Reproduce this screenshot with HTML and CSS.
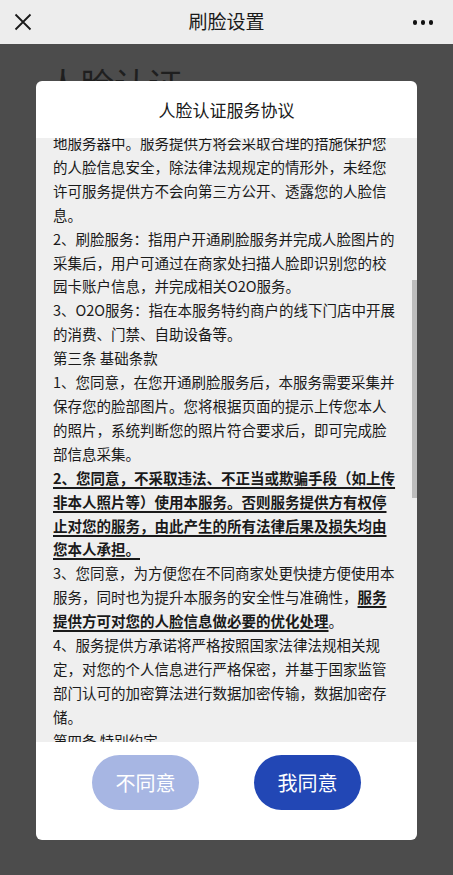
FILE: index.html
```html
<!DOCTYPE html>
<html lang="zh-CN">
<head>
<meta charset="utf-8">
<title>刷脸设置</title>
<link rel="stylesheet" href="styles.css">
</head>
<body>
<div class="nav">
  <svg class="nav-close" width="18" height="18" viewBox="0 0 18 18"><path d="M1.5 1.5 L16.5 16.5 M16.5 1.5 L1.5 16.5" stroke="#1a1a1a" stroke-width="1.8" fill="none"/></svg>
  <div class="nav-title">刷脸设置</div>
  <div class="nav-more"><span></span><span></span><span></span></div>
</div>
<div class="page">
  <div class="page-heading">人脸认证</div>
</div>
<div class="modal">
  <div class="modal-title">人脸认证服务协议</div>
  <div class="modal-body">
    <div class="terms">
      <p>地服务器中。服务提供方将会采取合理的措施保护您<br>的人脸信息安全，除法律法规规定的情形外，未经您<br>许可服务提供方不会向第三方公开、透露您的人脸信<br>息。</p>
      <p>2、刷脸服务：指用户开通刷脸服务并完成人脸图片的<br>采集后，用户可通过在商家处扫描人脸即识别您的校<br>园卡账户信息，并完成相关O2O服务。</p>
      <p>3、O2O服务：指在本服务特约商户的线下门店中开展<br>的消费、门禁、自助设备等。</p>
      <p>第三条 基础条款</p>
      <p>1、您同意，在您开通刷脸服务后，本服务需要采集并<br>保存您的脸部图片。您将根据页面的提示上传您本人<br>的照片，系统判断您的照片符合要求后，即可完成脸<br>部信息采集。</p>
      <p><b class="em">2、您同意，不采取违法、不正当或欺骗手段（如上传<br>非本人照片等）使用本服务。否则服务提供方有权停<br>止对您的服务，由此产生的所有法律后果及损失均由<br>您本人承担。</b></p>
      <p>3、您同意，为方便您在不同商家处更快捷方便使用本<br>服务，同时也为提升本服务的安全性与准确性，<b class="em">服务<br>提供方可对您的人脸信息做必要的优化处理</b>。</p>
      <p>4、服务提供方承诺将严格按照国家法律法规相关规<br>定，对您的个人信息进行严格保密，并基于国家监管<br>部门认可的加密算法进行数据加密传输，数据加密存<br>储。</p>
      <p>第四条 特别约定</p>
    </div>
    <div class="scrollbar"></div>
  </div>
  <div class="modal-footer">
    <button class="btn btn-disagree">不同意</button>
    <button class="btn btn-agree">我同意</button>
  </div>
</div>
</body>
</html>
```
FILE: styles.css
```css
html, body {
  margin: 0;
  padding: 0;
}
body {
  width: 453px;
  height: 875px;
  overflow: hidden;
  background: #4c4c4c;
  font-family: "Noto Sans CJK SC", "Noto Sans", sans-serif;
  position: relative;
}
.nav {
  height: 44px;
  background: #ededed;
  display: flex;
  align-items: center;
  justify-content: space-between;
  padding: 0 20px 0 14px;
  box-sizing: border-box;
  position: relative;
}
.nav-close {
  display: block;
}
.nav-title {
  position: absolute;
  left: 0;
  right: 0;
  text-align: center;
  font-size: 19px;
  color: #1a1a1a;
  line-height: 44px;
  top: -1px;
}
.nav-more {
  display: flex;
  gap: 3.5px;
  margin-top: 1px;
}
.nav-more span {
  width: 4.5px;
  height: 4.5px;
  border-radius: 50%;
  background: #111;
}
.page {
  padding: 20px 0 0 46px;
}
.page-heading {
  font-size: 34px;
  line-height: 40px;
  color: #1f1f1f;
}
.modal {
  position: absolute;
  left: 36px;
  top: 81px;
  width: 381px;
  height: 759px;
  background: #fff;
  border-radius: 6px;
  overflow: hidden;
  display: flex;
  flex-direction: column;
}
.modal-title {
  height: 57px;
  flex: none;
  text-align: center;
  font-size: 17px;
  line-height: 57px;
  color: #1a1a1a;
}
.modal-body {
  height: 604px;
  flex: none;
  background: #efefef;
  overflow: hidden;
  position: relative;
}
.terms {
  margin-top: -7px;
  padding-left: 17px;
  font-size: 14.5px;
  line-height: 23.9px;
  color: #1a1a1a;
  white-space: nowrap;
}
.terms p {
  margin: 0;
}
.em {
  font-weight: bold;
  text-decoration: underline;
  text-decoration-thickness: 1.5px;
  text-underline-offset: 3px;
}
.scrollbar {
  position: absolute;
  right: 0;
  top: 142px;
  width: 5px;
  height: 218px;
  background: #bdbdbd;
}
.modal-footer {
  flex: 1;
  display: flex;
  justify-content: center;
  align-items: flex-start;
  gap: 55px;
  padding-top: 13px;
}
.btn {
  width: 107px;
  height: 55px;
  border: none;
  border-radius: 28px;
  color: #fff;
  font-family: "Noto Sans CJK SC", "Noto Sans", sans-serif;
  font-size: 20px;
  padding: 0;
}
.btn-disagree {
  background: #a7b6e3;
}
.btn-agree {
  background: #2247b5;
}
```
